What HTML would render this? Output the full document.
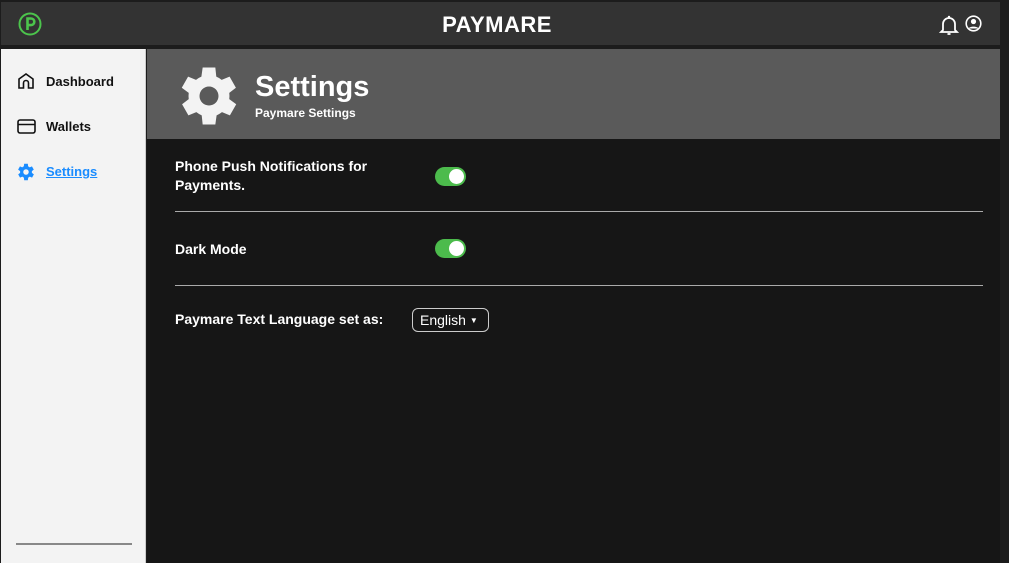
<!DOCTYPE html>
<html><head><meta charset="utf-8"><style>
*{margin:0;padding:0;box-sizing:border-box}
body{width:1009px;height:563px;background:#1c1c1c;font-family:"Liberation Sans",sans-serif;position:relative;overflow:hidden}
.hdr{position:absolute;left:1px;top:2px;width:999px;height:43px;background:#333}
.title{position:absolute;left:0;width:992px;top:10px;text-align:center;color:#fff;font-weight:bold;font-size:22px;letter-spacing:0.5px}
.side{position:absolute;left:1px;top:49px;width:145px;height:514px;background:#f3f3f3;border-right:1px solid #ccc}
.nav{position:absolute;left:45px;font-size:13px;font-weight:bold;color:#111}
.main{position:absolute;left:147px;top:49px;width:853px;height:514px;background:#161616}
.ban{position:absolute;left:0;top:0;width:853px;height:90px;background:#5a5a5a}
.lbl{position:absolute;left:28px;color:#fff;font-weight:bold;font-size:14px;line-height:19px}
.tog{position:absolute;left:288px;width:31px;height:19px;border-radius:10px;background:#4cbb4c}
.tog:after{content:"";position:absolute;right:2px;top:2px;width:15px;height:15px;border-radius:50%;background:#fff}
.hr{position:absolute;left:28px;width:808px;height:1px;background:#aaa}
</style></head><body>
<div class="hdr">
<svg style="position:absolute;left:17px;top:10px" width="24" height="24" viewBox="0 0 24 24"><circle cx="12" cy="12" r="10.5" fill="none" stroke="#4cc44c" stroke-width="2"/><path d="M9.5 18V6.5h3.5a3.3 3.3 0 0 1 0 6.6H9.5" fill="none" stroke="#4cc44c" stroke-width="2.6"/></svg>
<div class="title">PAYMARE</div>
<svg style="position:absolute;left:938px;top:12px" width="20" height="22" viewBox="0 0 20 22"><path d="M4 16V10a6 6 0 0 1 12 0v6l2 2H2z" fill="none" stroke="#fff" stroke-width="1.8"/><circle cx="10" cy="3" r="1.2" fill="#fff"/><path d="M8.5 20h3" stroke="#fff" stroke-width="1.8"/></svg>
<svg style="position:absolute;left:964px;top:13px" width="17" height="17" viewBox="0 0 17 17"><circle cx="8.5" cy="8.5" r="7.3" fill="none" stroke="#fff" stroke-width="1.6"/><circle cx="8.5" cy="6.5" r="2.6" fill="#fff"/><path d="M3.5 13.5c1.5-2.5 8.5-2.5 10 0z" fill="#fff"/></svg>
</div>
<div class="side">
<svg style="position:absolute;left:16px;top:23px" width="18" height="18" viewBox="0 0 18 18"><path d="M2 16V7l7-5 7 5v9h-4.5v-5a2.5 2.5 0 0 0-5 0v5z" fill="none" stroke="#111" stroke-width="1.6"/></svg>
<div class="nav" style="top:25px">Dashboard</div>
<svg style="position:absolute;left:16px;top:70px" width="19" height="15" viewBox="0 0 19 15"><rect x="1" y="1" width="17" height="13" rx="2" fill="none" stroke="#111" stroke-width="1.6"/><path d="M1 5.5h17" stroke="#111" stroke-width="1.6"/></svg>
<div class="nav" style="top:70px">Wallets</div>
<svg style="position:absolute;left:14px;top:112px" width="22" height="22" viewBox="0 0 24 24"><path fill="#1a8cff" fill-rule="evenodd" d="M19.4 13a7.5 7.5 0 0 0 0-2l2.1-1.6-2-3.5-2.5 1a7.3 7.3 0 0 0-1.7-1L15 3h-4l-.4 2.9a7.3 7.3 0 0 0-1.7 1l-2.5-1-2 3.5L6.6 11a7.5 7.5 0 0 0 0 2l-2.1 1.6 2 3.5 2.5-1a7.3 7.3 0 0 0 1.7 1L11 21h4l.4-2.9a7.3 7.3 0 0 0 1.7-1l2.5 1 2-3.5zM13 15a3 3 0 1 1 0-6 3 3 0 0 1 0 6z" transform="translate(-1 0)"/></svg>
<div class="nav" style="top:115px;color:#1a8cff;text-decoration:underline">Settings</div>
<div style="position:absolute;left:15px;top:494px;width:116px;height:2px;background:#888"></div>
</div>
<div class="main">
<div class="ban">
<svg style="position:absolute;left:24px;top:9px" width="76" height="76" viewBox="0 0 24 24"><path fill="#f3f3f3" fill-rule="evenodd" d="M19.4 13a7.5 7.5 0 0 0 0-2l2.1-1.6-2-3.5-2.5 1a7.3 7.3 0 0 0-1.7-1L15 3h-4l-.4 2.9a7.3 7.3 0 0 0-1.7 1l-2.5-1-2 3.5L6.6 11a7.5 7.5 0 0 0 0 2l-2.1 1.6 2 3.5 2.5-1a7.3 7.3 0 0 0 1.7 1L11 21h4l.4-2.9a7.3 7.3 0 0 0 1.7-1l2.5 1 2-3.5zM13 15a3 3 0 1 1 0-6 3 3 0 0 1 0 6z" transform="translate(-1 0)"/></svg>
<div style="position:absolute;left:108px;top:22px;color:#fff;font-weight:bold;font-size:29px">Settings</div>
<div style="position:absolute;left:108px;top:57px;color:#fff;font-weight:bold;font-size:12px">Paymare Settings</div>
</div>
<div class="lbl" style="top:108px">Phone Push Notifications for<br>Payments.</div>
<div class="tog" style="top:118px"></div>
<div class="hr" style="top:162px"></div>
<div class="lbl" style="top:191px">Dark Mode</div>
<div class="tog" style="top:190px"></div>
<div class="hr" style="top:236px"></div>
<div class="lbl" style="top:261px">Paymare Text Language set as:</div>
<div style="position:absolute;left:265px;top:259px;width:77px;height:24px;border:1px solid #ccc;border-radius:6px;color:#fff;font-size:14px;line-height:22px;padding-left:7px">English <span style="font-size:8px;vertical-align:2px">▼</span></div>
</div>
</body></html>
